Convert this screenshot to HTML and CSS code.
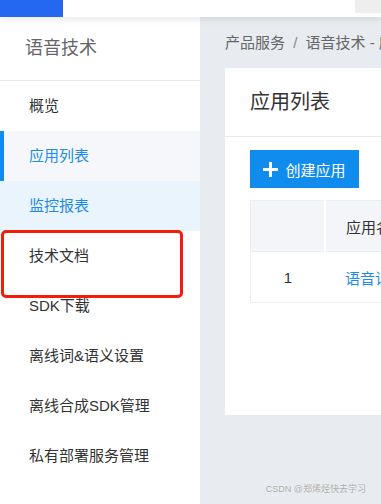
FILE: index.html
```html
<!DOCTYPE html>
<html lang="zh-CN">
<head>
    <meta charset="UTF-8">
    <meta name="viewport" content="width=device-width, initial-scale=1.0">
    <title>语音技术 - 应用列表</title>
    <link rel="stylesheet" href="styles.css">
</head>
<body>
    <div class="header">
        <div class="brand"></div>
        <div class="header-tool"></div>
    </div>

    <div class="layout">
        <div class="sidebar">
            <div class="side-title">语音技术</div>
            <ul class="menu">
                <li>概览</li>
                <li class="active">应用列表</li>
                <li class="hover">监控报表</li>
                <li>技术文档</li>
                <li>SDK下载</li>
                <li>离线词&amp;语义设置</li>
                <li>离线合成SDK管理</li>
                <li>私有部署服务管理</li>
            </ul>
        </div>

        <div class="main">
            <div class="breadcrumb">产品服务 <span class="sep">/</span> 语音技术 - 应用列表</div>
            <div class="card">
                <div class="card-title">应用列表</div>
                <div class="card-body">
                    <button type="button" class="btn-create">
                        <svg class="plus" width="15" height="15" viewBox="0 0 15 15">
                            <rect x="6" y="0" width="3" height="15" fill="#fff"/>
                            <rect x="0" y="6" width="15" height="3" fill="#fff"/>
                        </svg>
                        创建应用
                    </button>
                    <table class="app-table">
                        <tr>
                            <th class="col-num"></th>
                            <th>应用名称</th>
                        </tr>
                        <tr>
                            <td class="col-num">1</td>
                            <td><a href="#">语音识别应用</a></td>
                        </tr>
                    </table>
                </div>
            </div>
        </div>
    </div>

    <!-- annotation -->
    <div class="mark"></div>
    <div class="watermark">CSDN @郑烯烃快去学习</div>
</body>
</html>
```

FILE: styles.css
```css
html, body {
    margin: 0;
    height: 100%;
}
body {
    font-family: "Liberation Sans", "Noto Sans CJK SC", sans-serif;
    background-color: #e8ebf0;
    overflow: hidden;
    position: relative;
}
.header {
    height: 17px;
    background-color: #fff;
    display: flex;
    justify-content: space-between;
    box-shadow: 0 2px 8px rgba(0, 0, 0, 0.1);
    position: relative;
    z-index: 2;
}
.brand {
    width: 63px;
    background-color: #2468f2;
}
.header-tool {
    width: 26px;
    height: 13px;
    background-color: #eee;
}
.layout {
    display: flex;
    height: calc(100% - 17px);
}
.sidebar {
    width: 200px;
    flex-shrink: 0;
    background-color: #fff;
}
.side-title {
    height: 63px;
    line-height: 63px;
    padding-left: 25px;
    font-size: 18px;
    color: #666;
    border-bottom: 1px solid #e6e8ec;
}
.menu {
    list-style: none;
    margin: 0;
    padding: 0;
}
.menu li {
    height: 50px;
    line-height: 50px;
    padding-left: 29px;
    font-size: 15px;
    color: #333;
}
.menu li.active {
    background-color: #f5f7fa;
    color: #1e8beb;
    border-left: 4px solid #108cee;
    padding-left: 25px;
}
.menu li.hover {
    background-color: #e9f4fd;
    color: #1e8beb;
}
.main {
    flex: 1;
    padding-left: 25px;
    overflow: hidden;
}
.breadcrumb {
    height: 51px;
    line-height: 51px;
    font-size: 15px;
    color: #666;
    white-space: nowrap;
}
.breadcrumb .sep {
    margin: 0 4px;
    color: #888;
}
.card {
    background-color: #fff;
    height: 347px;
    width: 400px;
}
.card-title {
    height: 68px;
    line-height: 68px;
    padding-left: 25px;
    font-size: 20px;
    color: #333;
    border-bottom: 1px solid #e8eaee;
}
.card-body {
    padding: 13px 0 0 25px;
}
.btn-create {
    height: 38px;
    width: 109px;
    border: none;
    background-color: #108cee;
    color: #fff;
    font-family: inherit;
    font-size: 15px;
    padding: 0;
    display: flex;
    align-items: center;
    justify-content: center;
    gap: 7px;
}
.app-table {
    margin-top: 12px;
    border-collapse: collapse;
    border: 1px solid #ebeef5;
    width: 400px;
    font-size: 15px;
}
.app-table th,
.app-table td {
    height: 50px;
    padding: 0 0 0 20px;
    text-align: left;
    white-space: nowrap;
}
.app-table th {
    background-color: #f3f5f8;
    font-weight: normal;
    color: #333;
    border-left: 2px solid #fff;
}
.app-table th.col-num {
    border-left: none;
}
.app-table .col-num {
    width: 73px;
    padding: 0;
    text-align: center;
    color: #333;
}
.app-table td {
    border-top: 1px solid #ebeef5;
}
.app-table a {
    color: #1e8beb;
    text-decoration: none;
}
.mark {
    position: absolute;
    left: 1px;
    top: 230px;
    width: 182px;
    height: 68px;
    box-sizing: border-box;
    border: 3px solid #f51c0c;
    border-radius: 5px;
}
.watermark {
    position: absolute;
    right: 15px;
    bottom: 9px;
    font-size: 9px;
    color: #aaa;
    text-shadow: 0 0 1px #fff;
}
```
